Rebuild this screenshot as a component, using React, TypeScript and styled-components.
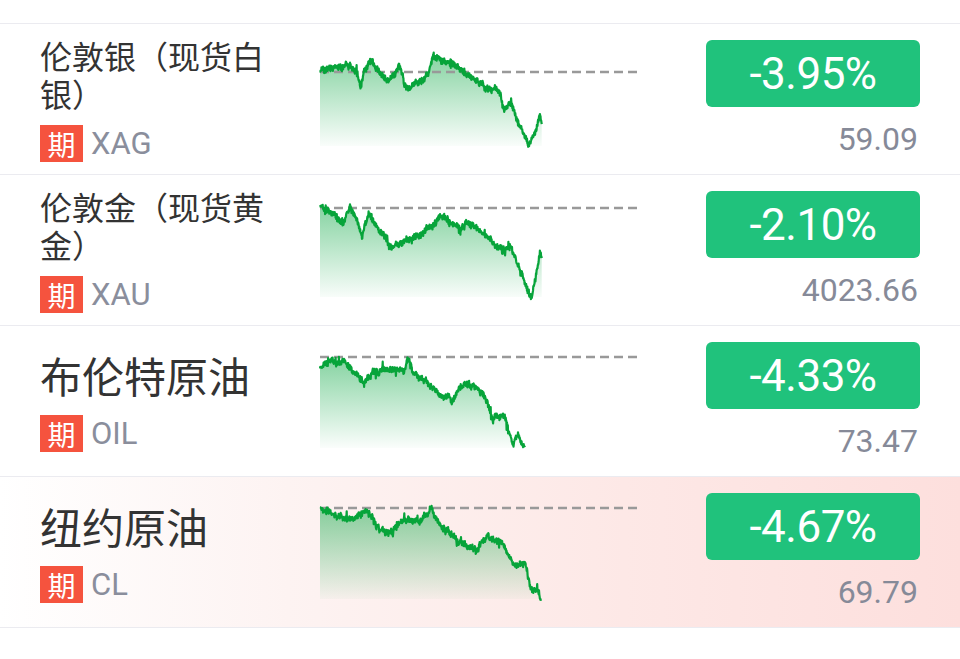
import React from 'react'
import styled, { createGlobalStyle } from 'styled-components'

const GlobalStyle = createGlobalStyle`
  html, body {
    margin: 0;
    padding: 0;
    background: #ffffff;
  }

  body {
    font-family: Roboto, 'Noto Sans CJK SC', sans-serif;
    -webkit-font-smoothing: antialiased;
  }
`

const CHART_W = 318
const CHART_H = 106
const BASE_Y = 100

type Point = [number, number]

type Quote = {
  name: string
  code: string
  change: string
  price: string
  nameSize: number
  highlight?: boolean
  prevClose: number
  seed: number
  path: Point[]
}

const quotes: Quote[] = [
  {
    name: '伦敦银（现货白银）',
    code: 'XAG',
    change: '-3.95%',
    price: '59.09',
    nameSize: 32,
    prevClose: 26,
    seed: 11,
    path: [
      [0, 25], [12, 22], [30, 20], [38, 30], [41, 44], [44, 26], [50, 15], [58, 25],
      [67, 35], [80, 22], [86, 42], [100, 35], [108, 28], [113, 10], [125, 15],
      [137, 20], [153, 33], [170, 43], [180, 46], [184, 64], [190, 56], [200, 80],
      [207, 93], [209, 100], [215, 86], [220, 71], [222, 79],
    ],
  },
  {
    name: '伦敦金（现货黄金）',
    code: 'XAU',
    change: '-2.10%',
    price: '4023.66',
    nameSize: 32,
    prevClose: 11,
    seed: 23,
    path: [
      [0, 9], [10, 14], [23, 28], [30, 11], [36, 20], [42, 38], [48, 17], [60, 34],
      [73, 50], [90, 42], [100, 38], [112, 28], [120, 19], [132, 26], [140, 33],
      [147, 25], [160, 34], [170, 42], [183, 55], [190, 47], [200, 72], [206, 88],
      [210, 102], [214, 90], [220, 54], [222, 63],
    ],
  },
  {
    name: '布伦特原油',
    code: 'OIL',
    change: '-4.33%',
    price: '73.47',
    nameSize: 42,
    prevClose: 9,
    seed: 37,
    path: [
      [0, 19], [8, 15], [20, 13], [30, 18], [43, 34], [52, 25], [63, 21], [75, 22],
      [84, 23], [88, 9], [93, 24], [105, 32], [120, 46], [133, 51], [145, 34],
      [155, 40], [164, 46], [172, 69], [185, 69], [193, 97], [198, 86], [203, 96],
      [205, 99],
    ],
  },
  {
    name: '纽约原油',
    code: 'CL',
    change: '-4.67%',
    price: '69.79',
    nameSize: 42,
    prevClose: 9,
    seed: 51,
    highlight: true,
    path: [
      [0, 9], [12, 14], [27, 22], [38, 15], [47, 12], [56, 26], [67, 35], [78, 26],
      [87, 20], [100, 22], [111, 10], [117, 23], [130, 34], [140, 43], [157, 52],
      [167, 37], [175, 40], [183, 45], [193, 65], [205, 65], [210, 87], [218, 90],
      [221, 103],
    ],
  },
]

// small deterministic PRNG so every render draws the same tape
const mulberry32 = (seed: number) => {
  let a = seed
  return () => {
    a |= 0
    a = (a + 0x6d2b79f5) | 0
    let t = Math.imul(a ^ (a >>> 15), 1 | a)
    t = (t + Math.imul(t ^ (t >>> 7), 61 | t)) ^ t
    return ((t ^ (t >>> 14)) >>> 0) / 4294967296
  }
}

const interp = (pts: Point[], x: number) => {
  for (let i = 1; i < pts.length; i++) {
    const [x0, y0] = pts[i - 1]
    const [x1, y1] = pts[i]
    if (x <= x1) {
      const t = x1 === x0 ? 0 : (x - x0) / (x1 - x0)
      return y0 + (y1 - y0) * t
    }
  }
  return pts[pts.length - 1][1]
}

const buildSeries = (pts: Point[], seed: number): Point[] => {
  const rand = mulberry32(seed)
  const end = pts[pts.length - 1][0]
  const out: Point[] = []
  let drift = 0
  for (let x = 0; x <= end; x += 0.3) {
    drift = drift * 0.82 + (rand() - 0.5) * 2.6
    let jitter = (rand() - 0.5) * 5
    // the odd tick spike
    if (rand() < 0.05) jitter += (rand() - 0.5) * 10
    const edge = x < 1.5 || x > end - 1 ? 0.3 : 1
    const y = interp(pts, x) + (drift + jitter) * edge
    out.push([x, Math.max(1, Math.min(CHART_H - 1, y))])
  }
  return out
}

const Page = styled.div`
  width: 960px;
  min-height: 659px;
  background: #ffffff;
`

const TopStrip = styled.div`
  height: 23px;
  border-bottom: 1px solid #ebebf0;
`

const Row = styled.div<{ $highlight?: boolean }>`
  display: flex;
  align-items: center;
  height: 150px;
  padding: 0 40px;
  border-bottom: 1px solid #ebebf0;
  background: ${({ $highlight }) =>
    $highlight
      ? 'linear-gradient(90deg, #ffffff 0%, #fdf3f2 30%, #fde8e6 65%, #fddfdd 100%)'
      : '#ffffff'};
`

const NameCol = styled.div`
  display: flex;
  flex-direction: column;
  width: 240px;
  flex-shrink: 0;
`

const Name = styled.div<{ $size: number }>`
  font-family: 'Noto Sans CJK SC', Roboto, sans-serif;
  font-size: ${({ $size }) => $size}px;
  line-height: ${({ $size }) => Math.round($size * 1.19)}px;
  color: #333333;
  word-break: break-all;
`

const Meta = styled.div<{ $gap: number }>`
  display: flex;
  align-items: center;
  gap: 8px;
  margin-top: ${({ $gap }) => $gap}px;
`

const Badge = styled.span`
  display: flex;
  align-items: center;
  justify-content: center;
  width: 43px;
  height: 37px;
  background: #f5533e;
  color: #ffffff;
  font-family: 'Noto Sans CJK SC', sans-serif;
  font-size: 28px;
  line-height: 1;
`

const Code = styled.span`
  font-family: Roboto, sans-serif;
  font-size: 31px;
  color: #8a8e9c;
  line-height: 37px;
`

const ChartBox = styled.div`
  width: ${CHART_W}px;
  height: ${CHART_H}px;
  margin-left: 40px;
  flex-shrink: 0;

  svg {
    display: block;
    overflow: visible;
  }
`

const RightCol = styled.div`
  flex: 1;
  display: flex;
  flex-direction: column;
  align-items: flex-end;
`

const ChangePill = styled.div`
  display: flex;
  align-items: center;
  justify-content: center;
  width: 214px;
  height: 67px;
  border-radius: 6px;
  background: #20c27c;
  color: #ffffff;
  font-family: Roboto, sans-serif;
  font-size: 44px;
  letter-spacing: -0.5px;
`

const Price = styled.div`
  margin-top: 13px;
  padding-right: 2px;
  font-family: Roboto, sans-serif;
  font-size: 32px;
  line-height: 38px;
  color: #868a98;
`

const Sparkline = ({ quote, id }: { quote: Quote; id: string }) => {
  const series = buildSeries(quote.path, quote.seed)
  const line = series.map(([x, y], i) => `${i ? 'L' : 'M'}${x.toFixed(1)},${y.toFixed(1)}`).join('')
  const lastX = series[series.length - 1][0]
  const area = `${line}L${lastX.toFixed(1)},${BASE_Y}L0,${BASE_Y}Z`

  return (
    <svg width={CHART_W} height={CHART_H} viewBox={`0 0 ${CHART_W} ${CHART_H}`}>
      <defs>
        <linearGradient id={id} x1="0" y1="0" x2="0" y2="1">
          <stop offset="0%" stopColor="#1fae52" stopOpacity="0.55" />
          <stop offset="100%" stopColor="#1fae52" stopOpacity="0.02" />
        </linearGradient>
      </defs>
      <path d={area} fill={`url(#${id})`} />
      <line
        x1={0}
        y1={quote.prevClose}
        x2={CHART_W}
        y2={quote.prevClose}
        stroke="#999999"
        strokeWidth={2.5}
        strokeDasharray="9 5"
      />
      <path d={line} fill="none" stroke="#07a43a" strokeWidth={2.2} strokeLinejoin="round" />
    </svg>
  )
}

const QuoteRow = ({ quote, index }: { quote: Quote; index: number }) => (
  <Row $highlight={quote.highlight}>
    <NameCol>
      <Name $size={quote.nameSize}>{quote.name}</Name>
      <Meta $gap={quote.nameSize > 36 ? 15 : 13}>
        <Badge>期</Badge>
        <Code>{quote.code}</Code>
      </Meta>
    </NameCol>
    <ChartBox>
      <Sparkline quote={quote} id={`spark-fill-${index}`} />
    </ChartBox>
    <RightCol>
      <ChangePill>{quote.change}</ChangePill>
      <Price>{quote.price}</Price>
    </RightCol>
  </Row>
)

export default function App() {
  return (
    <>
      <GlobalStyle />
      <Page>
        <TopStrip />
        {quotes.map((q, i) => (
          <QuoteRow key={q.code} quote={q} index={i} />
        ))}
      </Page>
    </>
  )
}
